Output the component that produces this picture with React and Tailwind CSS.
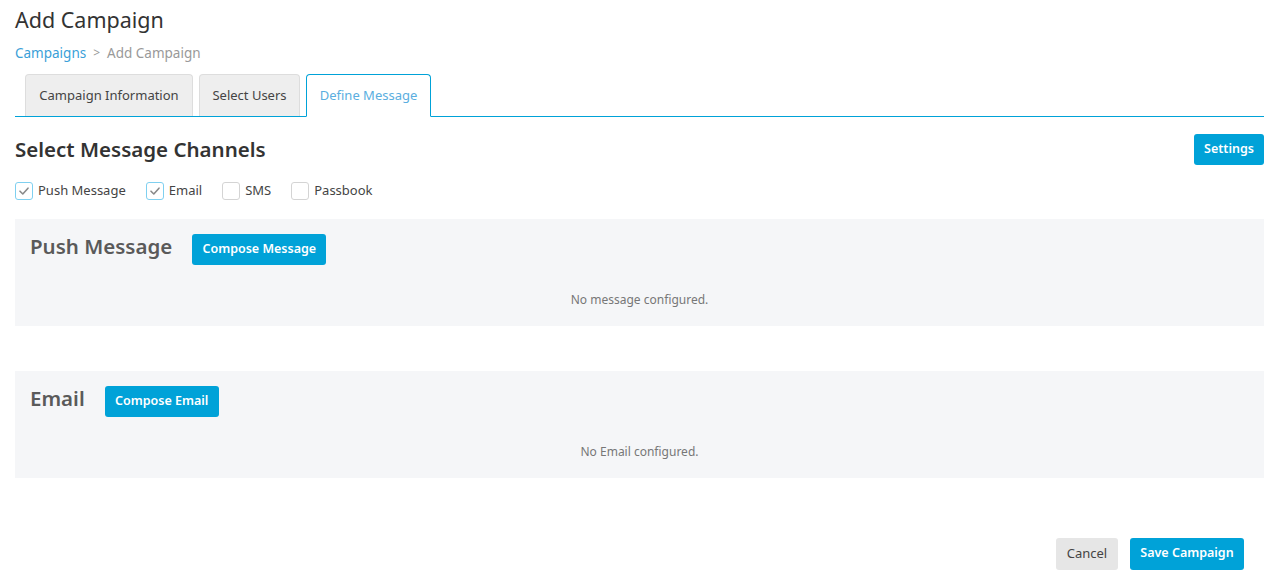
import React, { useState } from "react"

const font = { fontFamily: '"Noto Sans", "Open Sans", sans-serif' }

function Check({ checked, label, onToggle }) {
  return (
    <label className="flex items-center gap-[5px] cursor-pointer" onClick={onToggle}>
      <span
        className={`flex h-[18px] w-[18px] items-center justify-center rounded-[3px] border bg-white ${
          checked ? "border-[#7fd0f0]" : "border-[#d4d4d4]"
        }`}
      >
        {checked && (
          <svg width="12" height="12" viewBox="0 0 12 12" fill="none">
            <path d="M2 6.2 L4.8 9 L10 3.2" stroke="#8a8a8a" strokeWidth="1.6" strokeLinecap="round" strokeLinejoin="round" />
          </svg>
        )}
      </span>
      <span className="text-[13px] text-[#444]">{label}</span>
    </label>
  )
}

function ChannelPanel({ title, button, empty, btnWidth }) {
  return (
    <div className="bg-[#f5f6f8] h-[107px] px-[15px] pt-[15px]">
      <div className="flex items-center">
        <h3 className="text-[20.5px] font-semibold text-[#5a5a5a] leading-[24px] -mt-[6px]">{title}</h3>
        <button className={`ml-[20px] h-[31px] ${btnWidth} rounded-[3px] bg-[#00a2d8] text-white text-[12.5px] font-semibold`}>
          {button}
        </button>
      </div>
      <p className="mt-[26px] text-center text-[12px] text-[#777]">{empty}</p>
    </div>
  )
}

export default function App() {
  const [channels, setChannels] = useState({ push: true, email: true, sms: false, passbook: false })
  const toggle = (k) => setChannels({ ...channels, [k]: !channels[k] })

  return (
    <div className="bg-white min-h-[571px] px-[15px] pr-[11px]" style={font}>
      <h1 className="pt-[5px] text-[21.5px] leading-[30px] text-[#333]">Add Campaign</h1>
      <div className="mt-[8px] flex items-center text-[13.5px] leading-[20px]">
        <a className="text-[#3a9fd8]">Campaigns</a>
        <span className="mx-[7px] text-[12px] text-[#999]">&gt;</span>
        <span className="text-[#999]">Add Campaign</span>
      </div>

      {/* Tabs */}
      <div className="mt-[11px] flex items-end gap-[6px] pl-[10px] border-b border-[#00a2d8] h-[43px]">
        <div className="h-[42px] w-[168px] flex items-center justify-center rounded-t-[4px] border border-[#ddd] border-b-0 bg-[#eeeeee] text-[13px] text-[#444]">
          Campaign Information
        </div>
        <div className="h-[42px] w-[101px] flex items-center justify-center rounded-t-[4px] border border-[#ddd] border-b-0 bg-[#eeeeee] text-[13px] text-[#444]">
          Select Users
        </div>
        <div className="h-[43px] w-[125px] -mb-px flex items-center justify-center rounded-t-[4px] border border-[#00a2d8] border-b-white bg-white text-[13px] text-[#5aaee0]">
          Define Message
        </div>
      </div>

      <div className="mt-[15px] flex items-center justify-between">
        <h2 className="text-[20.5px] font-semibold text-[#333] leading-[34px]">Select Message Channels</h2>
        <button className="h-[31px] w-[70px] rounded-[3px] bg-[#00a2d8] text-white text-[12.5px] font-semibold">Settings</button>
      </div>

      <div className="mt-[15px] flex items-center gap-[20px]">
        <Check checked={channels.push} label="Push Message" onToggle={() => toggle("push")} />
        <Check checked={channels.email} label="Email" onToggle={() => toggle("email")} />
        <Check checked={channels.sms} label="SMS" onToggle={() => toggle("sms")} />
        <Check checked={channels.passbook} label="Passbook" onToggle={() => toggle("passbook")} />
      </div>

      <div className="mt-[18px] flex flex-col gap-[45px]">
        <ChannelPanel title="Push Message" button="Compose Message" empty="No message configured." btnWidth="w-[134px]" />
        <ChannelPanel title="Email" button="Compose Email" empty="No Email configured." btnWidth="w-[114px]" />
      </div>

      <div className="mt-[60px] flex justify-end gap-[12px] pr-[20px]">
        <button className="h-[32px] w-[62px] rounded-[3px] bg-[#e6e6e6] text-[13px] text-[#444]">Cancel</button>
        <button className="h-[32px] w-[114px] rounded-[3px] bg-[#00a2d8] text-white text-[12.5px] font-semibold">Save Campaign</button>
      </div>
    </div>
  )
}
